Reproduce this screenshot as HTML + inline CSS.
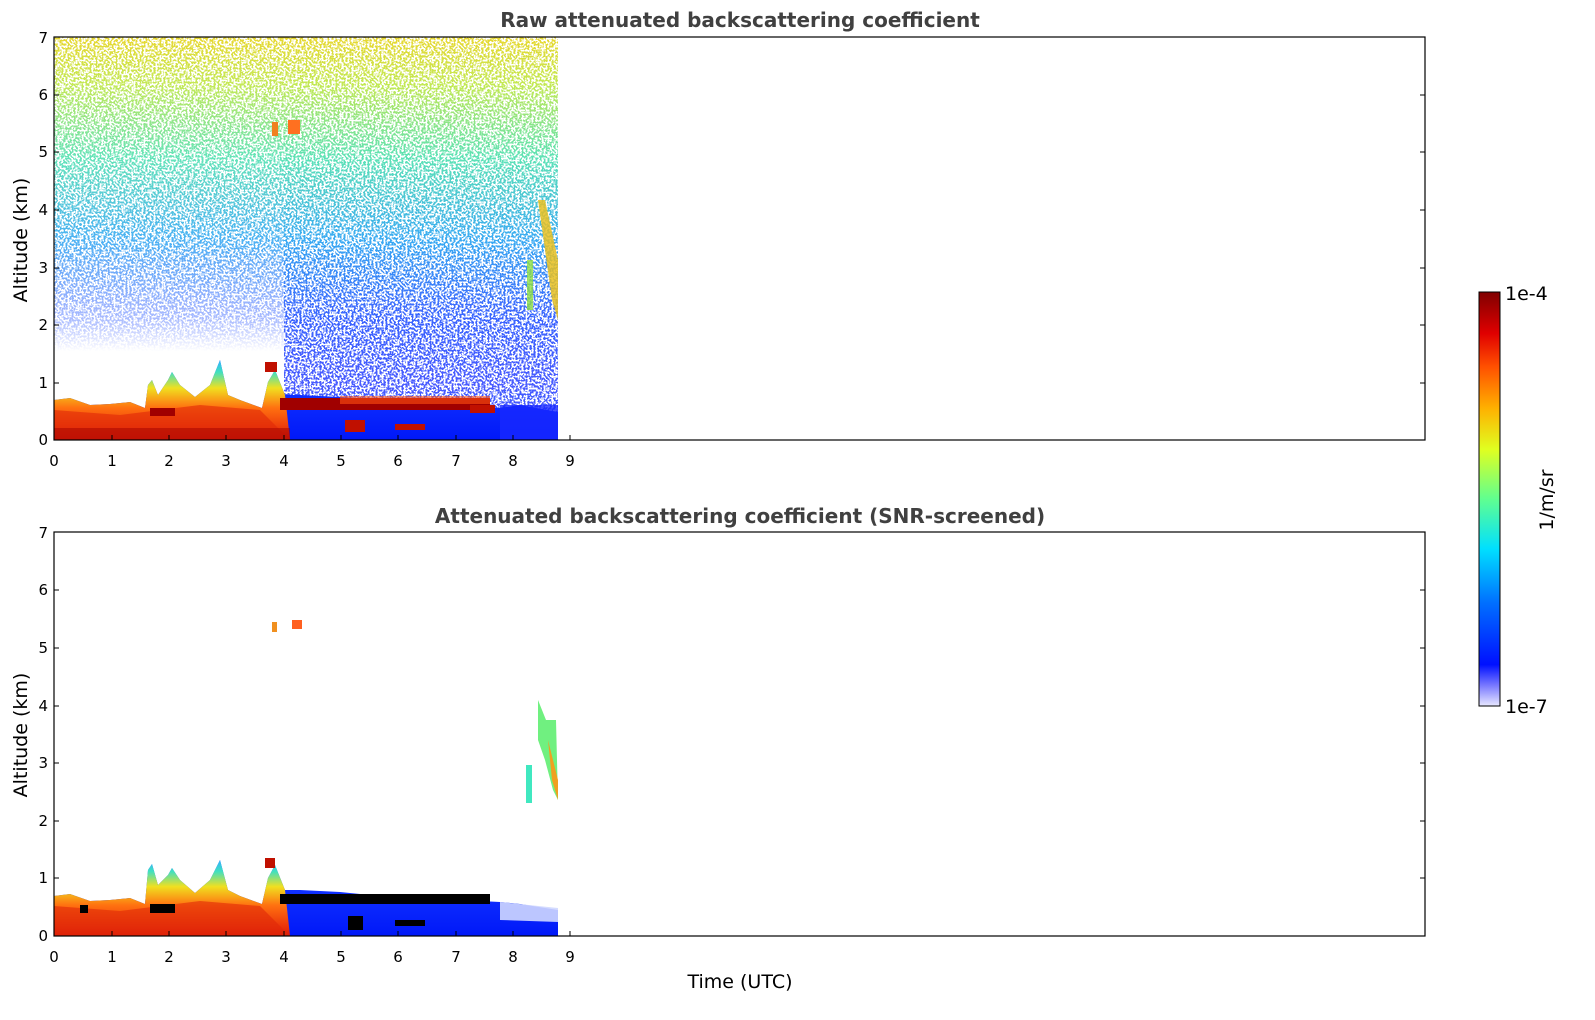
<!DOCTYPE html>
<html><head><meta charset="utf-8"><style>
html,body{margin:0;padding:0;background:#fff;}
svg{display:block;font-family:"DejaVu Sans","Liberation Sans",sans-serif;}
</style></head><body>
<svg width="1595" height="1020" viewBox="0 0 1595 1020" xmlns="http://www.w3.org/2000/svg">
<defs>
<linearGradient id="noiseG" gradientUnits="userSpaceOnUse" x1="0" y1="37" x2="0" y2="440">
<stop offset="0" stop-color="#e8d830"/>
<stop offset="0.12" stop-color="#c0e850"/>
<stop offset="0.3" stop-color="#50e0b0"/>
<stop offset="0.5" stop-color="#20a0f0"/>
<stop offset="0.7" stop-color="#1040ff"/>
<stop offset="1" stop-color="#0010ff"/>
</linearGradient>
<linearGradient id="densL" gradientUnits="userSpaceOnUse" x1="0" y1="37" x2="0" y2="440">
<stop offset="0" stop-color="#fff" stop-opacity="1"/>
<stop offset="0.5" stop-color="#fff" stop-opacity="0.8"/>
<stop offset="0.7" stop-color="#fff" stop-opacity="0.35"/>
<stop offset="0.78" stop-color="#fff" stop-opacity="0"/>
<stop offset="1" stop-color="#fff" stop-opacity="0"/>
</linearGradient>
<linearGradient id="densR" gradientUnits="userSpaceOnUse" x1="0" y1="37" x2="0" y2="440">
<stop offset="0" stop-color="#fff" stop-opacity="1"/>
<stop offset="0.6" stop-color="#fff" stop-opacity="0.85"/>
<stop offset="1" stop-color="#fff" stop-opacity="0.7"/>
</linearGradient>
<mask id="dm" maskUnits="userSpaceOnUse" x="54" y="37" width="504" height="403">
<rect x="54" y="37" width="230" height="403" fill="url(#densL)"/>
<rect x="284" y="37" width="274" height="403" fill="url(#densR)"/>
</mask>
<filter id="speck" filterUnits="userSpaceOnUse" x="54" y="37" width="504" height="403">
<feTurbulence type="fractalNoise" baseFrequency="0.5" numOctaves="1" seed="3" result="n"/>
<feColorMatrix in="n" type="matrix" values="0 0 0 0 0  0 0 0 0 0  0 0 0 0 0  3 0 0 0 -1.0" result="a"/>
<feComponentTransfer in="a" result="b"><feFuncA type="discrete" tableValues="0 1"/></feComponentTransfer>
<feComposite in="SourceGraphic" in2="b" operator="in"/>
</filter>
<linearGradient id="blL" x1="0" y1="0" x2="0" y2="1">
<stop offset="0" stop-color="#30b0ff"/>
<stop offset="0.15" stop-color="#40e0c0"/>
<stop offset="0.35" stop-color="#f0e020"/>
<stop offset="0.6" stop-color="#ff7010"/>
<stop offset="1" stop-color="#e01808"/>
</linearGradient>
<linearGradient id="blR" x1="0" y1="0" x2="0" y2="1">
<stop offset="0" stop-color="#3060ff"/>
<stop offset="0.4" stop-color="#1030ff"/>
<stop offset="1" stop-color="#0018f8"/>
</linearGradient>
<linearGradient id="cb" x1="0" y1="1" x2="0" y2="0">
<stop offset="0" stop-color="#e8e8ff"/>
<stop offset="0.05" stop-color="#7878ff"/>
<stop offset="0.1" stop-color="#0010ff"/>
<stop offset="0.25" stop-color="#0070ff"/>
<stop offset="0.38" stop-color="#00e0ff"/>
<stop offset="0.5" stop-color="#60ff90"/>
<stop offset="0.62" stop-color="#e0ff20"/>
<stop offset="0.72" stop-color="#ffb000"/>
<stop offset="0.82" stop-color="#ff5000"/>
<stop offset="0.9" stop-color="#e00000"/>
<stop offset="1" stop-color="#800000"/>
</linearGradient>
</defs>

<!-- TOP PLOT -->
<text x="740" y="27" text-anchor="middle" font-size="20" font-weight="bold" fill="#404040">Raw attenuated backscattering coefficient</text>
<g mask="url(#dm)"><rect x="54" y="37" width="504" height="403" fill="url(#noiseG)" filter="url(#speck)"/></g>
<polygon points="54,400 70,398 90,405 110,404 130,402 145,408 148,385 152,380 158,395 168,380 172,372 180,385 195,397 210,385 220,360 228,395 240,400 262,408 268,382 275,370 285,395 300,395 340,397 380,400 420,403 460,405 500,408 520,405 558,412 558,440 54,440" fill="url(#blR)"/>
<polygon points="54,400 70,398 90,405 110,404 130,402 145,408 148,385 152,380 158,395 168,380 172,372 180,385 195,397 210,385 220,360 228,395 240,400 262,408 268,382 275,370 285,395 290,440 54,440" fill="url(#blL)"/>
<polygon points="54,410 120,415 200,405 260,410 290,440 54,440" fill="#e02808" opacity="0.6"/>
<polygon points="54,428 290,428 290,440 54,440" fill="#a00000" opacity="0.5"/>
<rect x="280" y="398" width="210" height="12" fill="#a00000"/>
<rect x="340" y="396" width="150" height="8" fill="#ff5010" opacity="0.6"/>
<rect x="150" y="408" width="25" height="8" fill="#a00000"/>
<rect x="265" y="362" width="12" height="10" fill="#c01000"/>
<rect x="345" y="420" width="20" height="12" fill="#c01000"/>
<rect x="395" y="424" width="30" height="6" fill="#c01000"/>
<rect x="470" y="405" width="25" height="8" fill="#c01000"/>
<rect x="272" y="122" width="6" height="14" fill="#f08020"/>
<rect x="288" y="120" width="12" height="14" fill="#ff7020"/>
<polygon points="538,200 552,300 558,320 558,260 545,200" fill="#e8c020" opacity="0.85"/>
<rect x="527" y="260" width="6" height="50" fill="#90e040" opacity="0.8"/>
<rect x="500" y="405" width="58" height="35" fill="#1828ff" opacity="0.8"/>
<rect x="54" y="37" width="1371" height="403" fill="none" stroke="#000" stroke-width="1.2"/>

<!-- BOTTOM PLOT -->
<text x="740" y="523" text-anchor="middle" font-size="20" font-weight="bold" fill="#404040">Attenuated backscattering coefficient (SNR-screened)</text>
<polygon points="54,896 70,894 90,901 110,900 130,898 145,904 148,870 152,864 158,885 168,875 172,868 180,880 195,893 210,880 220,860 228,890 240,896 262,904 268,878 275,865 285,890 300,890 340,892 380,896 420,898 460,900 500,902 520,904 558,910 558,936 54,936" fill="url(#blR)"/>
<polygon points="500,902 558,908 558,922 500,920" fill="#d0d8ff" opacity="0.9"/>
<polygon points="54,896 70,894 90,901 110,900 130,898 145,904 148,870 152,864 158,885 168,875 172,868 180,880 195,893 210,880 220,860 228,890 240,896 262,904 268,878 275,865 285,890 290,936 54,936" fill="url(#blL)"/>
<polygon points="54,906 120,911 200,901 260,906 290,936 54,936" fill="#e02808" opacity="0.6"/>
<rect x="280" y="894" width="210" height="10" fill="#000"/>
<rect x="150" y="904" width="25" height="9" fill="#000"/>
<rect x="80" y="905" width="8" height="8" fill="#000"/>
<rect x="265" y="858" width="10" height="10" fill="#c01000"/>
<rect x="348" y="916" width="15" height="14" fill="#000"/>
<rect x="395" y="920" width="30" height="6" fill="#000"/>
<rect x="272" y="622" width="5" height="10" fill="#f09020"/>
<rect x="292" y="620" width="10" height="9" fill="#ff6020"/>
<polygon points="538,700 546,720 556,720 558,800 553,790 545,760 538,740" fill="#70f080"/>
<polygon points="548,740 558,780 558,800 552,780" fill="#f0a020"/>
<rect x="526" y="765" width="6" height="38" fill="#40e8c0"/>
<rect x="54" y="532" width="1371" height="404" fill="none" stroke="#000" stroke-width="1.2"/>

<g stroke="#000" stroke-width="1">
<path d="M54,440v-5M112,440v-5M169,440v-5M226,440v-5M284,440v-5M341,440v-5M398,440v-5M456,440v-5M513,440v-5M570,440v-5"/>
<path d="M54,936v-5M112,936v-5M169,936v-5M226,936v-5M284,936v-5M341,936v-5M398,936v-5M456,936v-5M513,936v-5M570,936v-5"/>
<path d="M54,95h5M54,152h5M54,210h5M54,268h5M54,325h5M54,383h5M1425,95h-5M1425,152h-5M1425,210h-5M1425,268h-5M1425,325h-5M1425,383h-5"/>
<path d="M54,590h5M54,648h5M54,706h5M54,763h5M54,821h5M54,878h5M1425,590h-5M1425,648h-5M1425,706h-5M1425,763h-5M1425,821h-5M1425,878h-5"/>
</g>
<g font-size="15" fill="#000" text-anchor="middle">
<text x="54" y="466">0</text><text x="112" y="466">1</text><text x="169" y="466">2</text><text x="226" y="466">3</text><text x="284" y="466">4</text><text x="341" y="466">5</text><text x="398" y="466">6</text><text x="456" y="466">7</text><text x="513" y="466">8</text><text x="570" y="466">9</text>
<text x="54" y="962">0</text><text x="112" y="962">1</text><text x="169" y="962">2</text><text x="226" y="962">3</text><text x="284" y="962">4</text><text x="341" y="962">5</text><text x="398" y="962">6</text><text x="456" y="962">7</text><text x="513" y="962">8</text><text x="570" y="962">9</text>
</g>
<g font-size="15" fill="#000" text-anchor="end">
<text x="48" y="445">0</text><text x="48" y="388">1</text><text x="48" y="330">2</text><text x="48" y="273">3</text><text x="48" y="215">4</text><text x="48" y="157">5</text><text x="48" y="100">6</text><text x="48" y="43">7</text>
<text x="48" y="941">0</text><text x="48" y="883">1</text><text x="48" y="826">2</text><text x="48" y="768">3</text><text x="48" y="711">4</text><text x="48" y="653">5</text><text x="48" y="595">6</text><text x="48" y="538">7</text>
</g>
<text transform="translate(27,240) rotate(-90)" text-anchor="middle" font-size="19" fill="#000">Altitude (km)</text>
<text transform="translate(27,735) rotate(-90)" text-anchor="middle" font-size="19" fill="#000">Altitude (km)</text>
<text x="740" y="988" text-anchor="middle" font-size="19" fill="#000">Time (UTC)</text>

<rect x="1479" y="292" width="21" height="414" fill="url(#cb)" stroke="#000" stroke-width="1"/>
<text x="1505" y="300" font-size="19" fill="#000">1e-4</text>
<text x="1505" y="713" font-size="19" fill="#000">1e-7</text>
<text transform="translate(1553,500) rotate(-90)" text-anchor="middle" font-size="19" fill="#000">1/m/sr</text>
</svg>
</body></html>
